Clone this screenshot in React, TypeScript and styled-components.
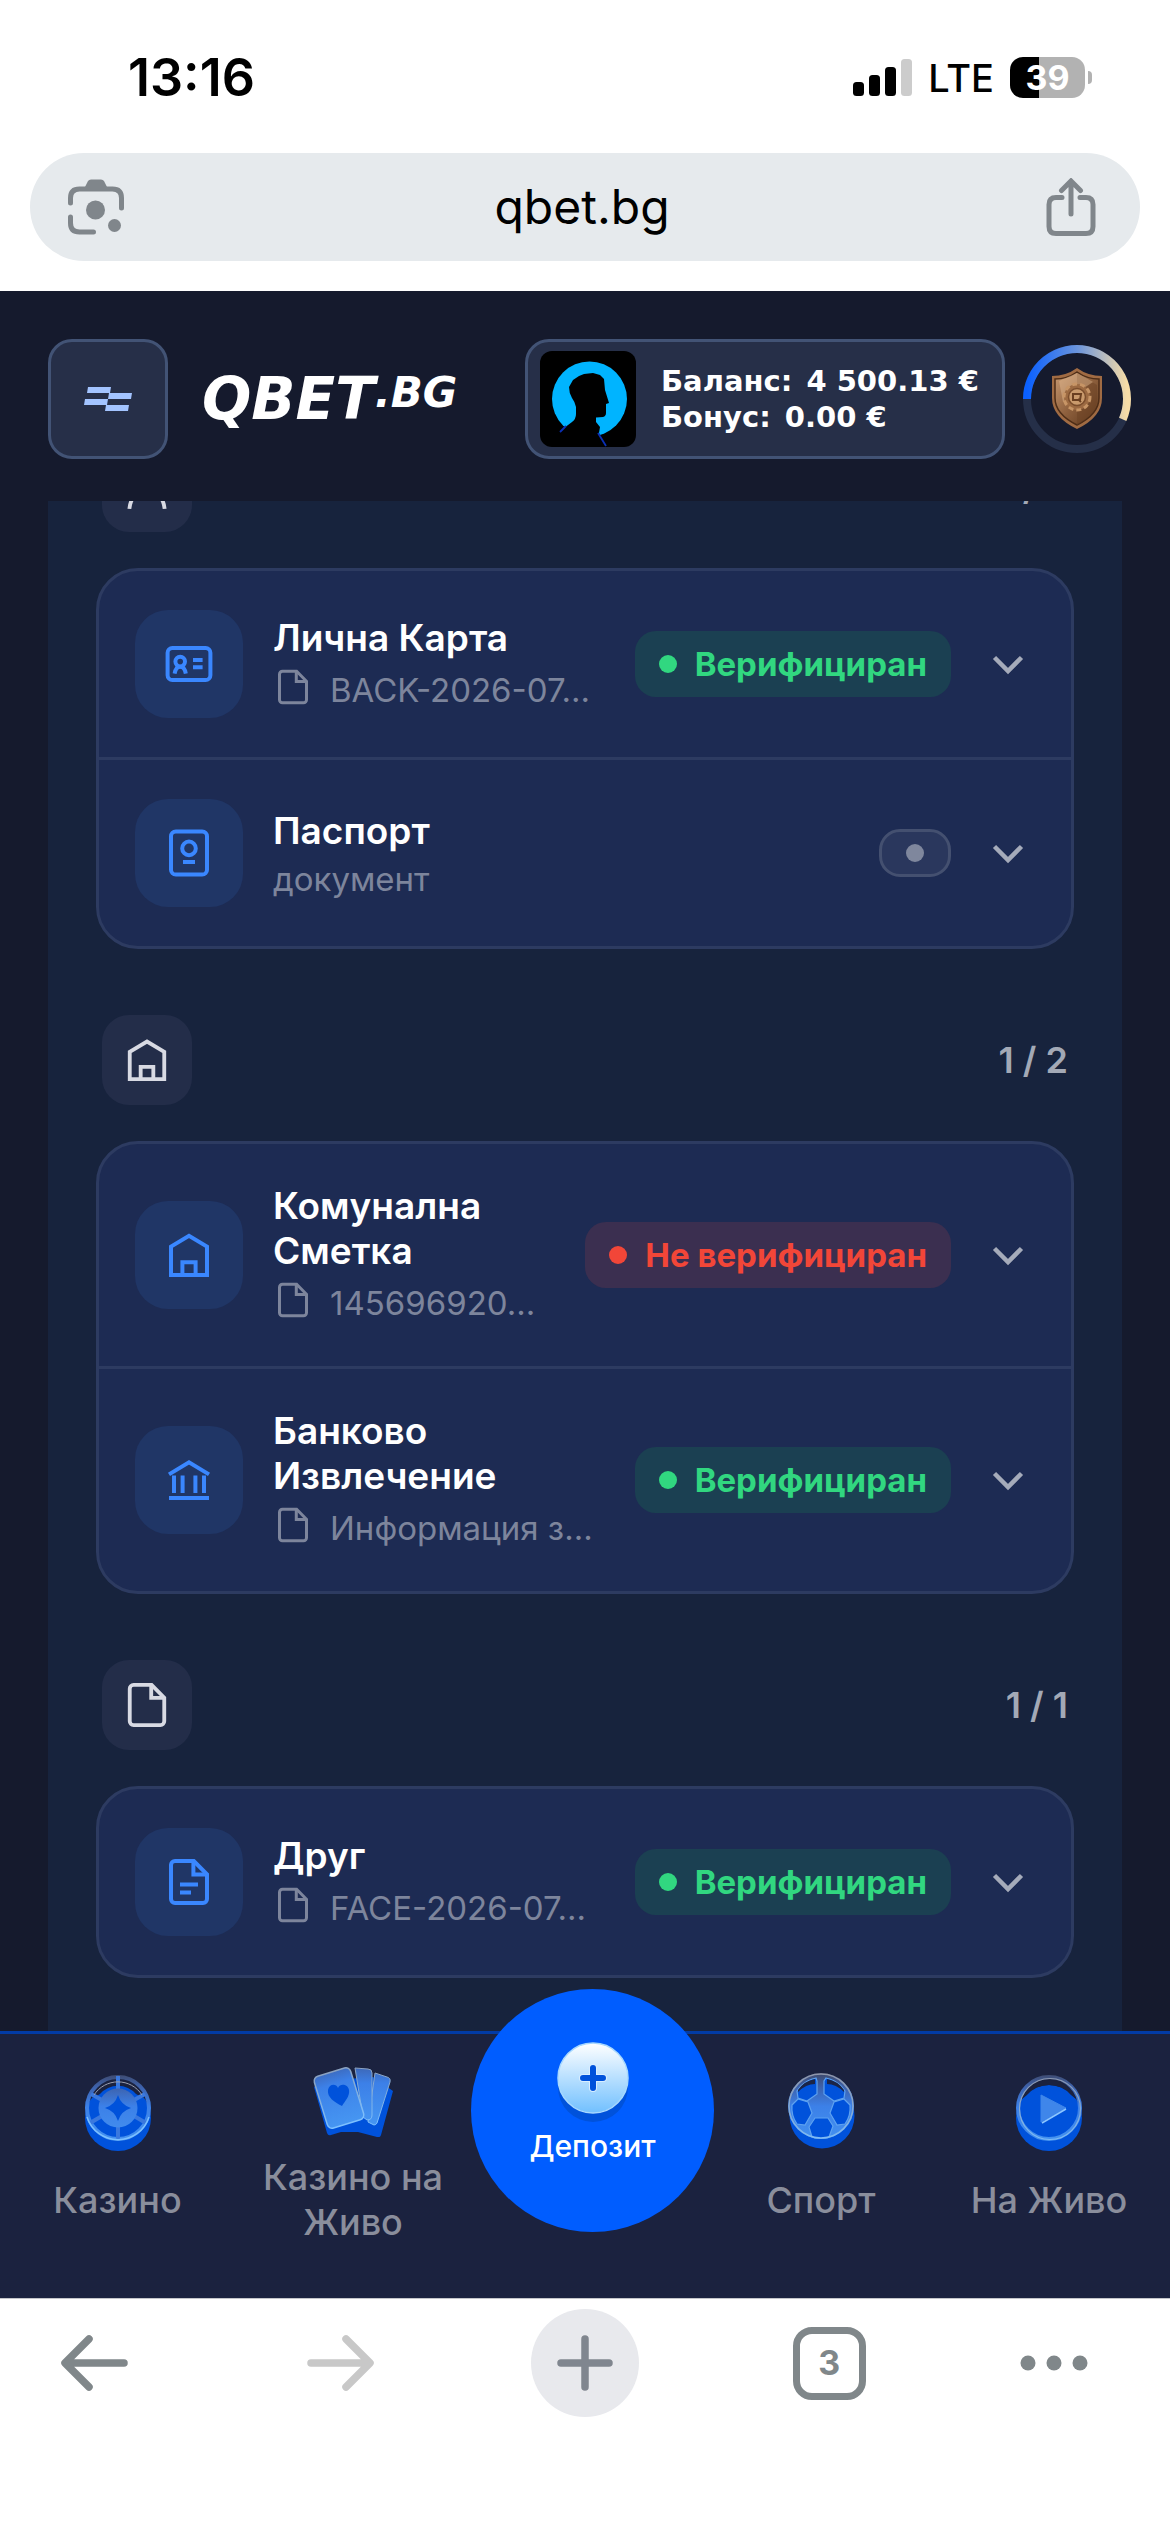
import React from "react";
import styled, { createGlobalStyle, css } from "styled-components";

const GlobalStyle = createGlobalStyle`
  *, *::before, *::after { box-sizing: border-box; }
  body {
    margin: 0;
    background: #ffffff;
    font-family: Inter, "Noto Sans", sans-serif;
    -webkit-font-smoothing: antialiased;
  }
  button { margin: 0; padding: 0; border: 0; background: none; font: inherit; color: inherit; cursor: pointer; }
  a { color: inherit; text-decoration: none; }
  ul { margin: 0; padding: 0; list-style: none; }
  svg { display: block; flex: none; }
`;

const Screen = styled.div`
  display: flex;
  flex-direction: column;
  min-height: 100vh;
`;

/* ---------- phone and browser chrome ---------- */

const StatusBar = styled.div`
  display: flex;
  align-items: center;
  justify-content: space-between;
  height: 153px;
  padding: 2px 78px 0 128px;
  color: #000;
`;

const Clock = styled.time`
  font-size: 52px;
  font-weight: 600;
  line-height: 60px;
`;

const StatusIcons = styled.div`
  display: flex;
  align-items: center;
  gap: 16px;
`;

const Network = styled.span`
  font-size: 38px;
  font-weight: 500;
  line-height: 48px;
`;

const BatteryWrap = styled.div`
  display: flex;
  align-items: center;
  gap: 3px;
`;

const Battery = styled.span`
  width: 75px;
  height: 41px;
  border-radius: 13px;
  background: linear-gradient(90deg, #000 39%, #b2b2b2 39%);
  color: #fff;
  font-size: 34px;
  font-weight: 700;
  line-height: 41px;
  text-align: center;
`;

const BatteryCap = styled.span`
  width: 4px;
  height: 13px;
  border-radius: 0 4px 4px 0;
  background: #b2b2b2;
`;

const AddressBar = styled.div`
  display: flex;
  align-items: center;
  justify-content: space-between;
  height: 108px;
  margin: 0 30px 30px;
  padding: 0 38px;
  border-radius: 54px;
  background: #e6eaed;
  color: #80868b;
`;

const Host = styled.button`
  color: #000;
  font-size: 48px;
  line-height: 60px;
`;

/* ---------- site header ---------- */

const Site = styled.div`
  flex: 1;
  display: flex;
  flex-direction: column;
  background: #151a2d;
  color: #fff;
`;

const Header = styled.header`
  position: relative;
  z-index: 1;
  display: flex;
  align-items: center;
  padding: 48px 39px 42px 48px;
  background: #151a2d;
`;

const boxed = css`
  height: 120px;
  border: 3px solid #425375;
  border-radius: 24px;
  background: #262f48;
`;

const MenuButton = styled.button`
  ${boxed}
  display: grid;
  place-items: center;
  width: 120px;
`;

const Logo = styled.a`
  display: flex;
  align-items: flex-start;
  margin: 0 auto 0 34px;
  font-family: "DejaVu Sans", sans-serif;
  font-weight: 700;
  font-style: italic;
  font-size: 58px;
  line-height: 64px;
`;

const LogoSuffix = styled.span`
  font-size: 42px;
  line-height: 52px;
`;

const Wallet = styled.button`
  ${boxed}
  display: flex;
  align-items: center;
  gap: 25px;
  width: 480px;
  padding-left: 12px;
  margin-right: 18px;
  text-align: left;
`;

const Balances = styled.span`
  display: grid;
  font-family: "DejaVu Sans", sans-serif;
  font-size: 29px;
  font-weight: 700;
  line-height: 36px;
  white-space: nowrap;
`;

const Amount = styled.span`
  margin-left: 4px;
`;

/* ---------- document list ---------- */

const Panel = styled.main`
  flex: 1;
  margin: 0 48px;
  background: #17233d;
`;

/* The list is scrolled, so its first header starts under the site header. */
const Groups = styled.div`
  display: grid;
  gap: 66px;
  margin-top: -59px;
  padding: 0 48px 53px;
`;

const GroupHead = styled.div`
  display: flex;
  align-items: center;
  justify-content: space-between;
  padding: 0 6px;
  margin-bottom: 36px;
`;

const GroupIcon = styled.span`
  display: grid;
  place-items: center;
  width: 90px;
  height: 90px;
  border-radius: 27px;
  background: #232d49;
  color: #d8dae3;
`;

const Count = styled.span`
  color: #a3a9b6;
  font-size: 36px;
  font-weight: 600;
  line-height: 44px;
`;

const Card = styled.ul`
  border: 3px solid #2d3b61;
  border-radius: 42px;
  background: #1d2b53;
  overflow: hidden;
`;

const Item = styled.li`
  & + & { border-top: 3px solid #2d3b61; }
`;

const Row = styled.button`
  display: flex;
  align-items: center;
  gap: 30px;
  width: 100%;
  padding: 39px 36px;
  text-align: left;
`;

const RowIcon = styled.span`
  display: grid;
  place-items: center;
  flex: none;
  width: 108px;
  height: 108px;
  border-radius: 33px;
  background: #203666;
  color: #3a87ff;
`;

const RowText = styled.span`
  flex: 1;
  min-width: 0;
  display: block;
`;

const Title = styled.span`
  display: block;
  font-size: 37px;
  font-weight: 600;
  line-height: 45px;
`;

const Detail = styled.span<{ $file?: boolean }>`
  display: flex;
  gap: 19px;
  margin-top: 6px;
  padding-left: ${(p) => (p.$file ? "2px" : "0")};
  color: #7d859c;
  font-size: 33px;
  line-height: ${(p) => (p.$file ? "48px" : "40px")};
  white-space: nowrap;
  & > svg { margin-top: 3px; }
`;

const tones = {
  ok: { fg: "#31d780", bg: "#1b4052", line: "none" },
  bad: { fg: "#f24638", bg: "#3b2f50", line: "none" },
  none: { fg: "#7f879d", bg: "#2a375d", line: "3px solid #445070" },
};
type Tone = keyof typeof tones;

const Badge = styled.span<{ $tone: Tone }>`
  display: flex;
  flex: none;
  align-items: center;
  gap: 18px;
  height: ${(p) => (p.$tone === "none" ? "48px" : "66px")};
  padding: 0 24px;
  border: ${(p) => tones[p.$tone].line};
  border-radius: 21px;
  background: ${(p) => tones[p.$tone].bg};
  color: ${(p) => tones[p.$tone].fg};
  font-size: 33px;
  font-weight: 700;
  white-space: nowrap;
`;

const Dot = styled.span`
  width: 18px;
  height: 18px;
  border-radius: 50%;
  background: currentColor;
`;

const Chevron = styled.svg`
  width: 54px;
  height: 54px;
  color: #a5abba;
`;

/* ---------- site navigation ---------- */

const BottomNav = styled.nav`
  position: relative;
  z-index: 1;
  display: grid;
  grid-template-columns: 235fr 236fr 243fr 214fr 242fr;
  height: 267px;
  padding-bottom: 46px;
  border-top: 3px solid #023ba5;
  background: #1b223f;
`;

const NavLink = styled.a`
  display: flex;
  flex-direction: column;
  align-items: center;
  justify-content: center;
  gap: 18px;
  color: #8a8e9c;
  font-size: 36px;
  font-weight: 500;
  line-height: 45px;
  text-align: center;
`;

const NavLabel = styled.span`
  max-width: 192px;
`;

const Deposit = styled.button`
  display: flex;
  flex-direction: column;
  align-items: center;
  justify-self: center;
  gap: 4px;
  width: 243px;
  height: 243px;
  margin-top: -45px;
  padding-top: 51px;
  border-radius: 50%;
  background: #005dff;
  font-size: 30px;
  font-weight: 500;
  line-height: 36px;
`;

/* ---------- browser toolbar ---------- */

const Toolbar = styled.footer`
  display: flex;
  align-items: flex-start;
  justify-content: space-between;
  height: 234px;
  padding: 10px 86px 0 41px;
  border-top: 1px solid #c4c6ca;
  background: #fff;
  color: #80878a;
`;

const ToolButton = styled.button<{ $filled?: boolean; $narrow?: boolean }>`
  display: grid;
  place-items: center;
  width: ${(p) => (p.$narrow ? "64px" : "108px")};
  height: 108px;
  border-radius: 50%;
  background: ${(p) => (p.$filled ? "#e8e9ed" : "transparent")};
  color: ${(p) => (p.$filled ? "#80868f" : "inherit")};
  &:disabled { color: #c8c8c8; }
`;

const TabCount = styled.span`
  display: grid;
  place-items: center;
  width: 73px;
  height: 73px;
  border: 7px solid currentColor;
  border-radius: 19px;
  font-size: 34px;
  font-weight: 700;
  line-height: 40px;
`;

/* ---------- line icons ---------- */

type IconName = "person" | "house" | "bank" | "id" | "passport" | "doc" | "file";

const shapes: Record<IconName, React.ReactNode> = {
  person: (
    <>
      <circle cx="12" cy="6" r="4" />
      <path d="M2.8 23.4c.6-6 4-9.6 9.2-9.6s8.600 3.600 9.200 9.600" />
    </>
  ),
  house: (
    <>
      <path d="M3 22V7.800L12 2.400l9 5.400V22z" />
      <path d="M8.700 22v-6.400h6.600V22" />
    </>
  ),
  bank: <path d="M2 9.200 12 3.200l10 6M4.500 9.800v8.700M8.800 9.800v8.700M15.200 9.800v8.700M19.500 9.800v8.700M2 21h20" />,
  id: (
    <>
      <rect x="1.300" y="4" width="21.400" height="16" rx="2.400" />
      <circle cx="7.600" cy="10.800" r="2.400" />
      <path d="M4.800 16.800c.4-2.200 1.300-3.400 2.800-3.400s2.400 1.200 2.800 3.400M14 10h4.800M14 13.600h4.800" />
    </>
  ),
  passport: (
    <>
      <rect x="3" y="1.200" width="18" height="21.600" rx="2.400" />
      <circle cx="12" cy="9.700" r="3.400" />
      <path d="M9 16.500h6" />
    </>
  ),
  doc: (
    <>
      <path d="M5 1.500h9.400L21 8.200v12.300a2 2 0 0 1-2 2H5a2 2 0 0 1-2-2v-17a2 2 0 0 1 2-2z" />
      <path d="M14.200 2v6.300H21M7.500 13.200h9M7.500 17.200h5.500" />
    </>
  ),
  file: (
    <>
      <path d="M5 1.500h9.400L21 8.200v12.300a2 2 0 0 1-2 2H5a2 2 0 0 1-2-2v-17a2 2 0 0 1 2-2z" />
      <path d="M14.200 2v6.300H21" />
    </>
  ),
};

const Icon = ({ name, size }: { name: IconName; size: number }) => (
  <svg width={size} height={size} viewBox="0 0 24 24" fill="none" stroke="currentColor" strokeWidth="2" aria-hidden="true">
    {shapes[name]}
  </svg>
);

/* ---------- illustrations ---------- */

const Glass = ({ id }: { id: string }) => (
  <defs>
    <linearGradient id={id} gradientUnits="userSpaceOnUse" x1="0" y1="8" x2="0" y2="84">
      <stop offset="0" stopColor="#3f4764" />
      <stop offset="0.200" stopColor="#3d62ad" />
      <stop offset="0.450" stopColor="#3c80e8" />
      <stop offset="1" stopColor="#4696f2" />
    </linearGradient>
    <linearGradient id={id + "e"} gradientUnits="userSpaceOnUse" x1="0" y1="8" x2="0" y2="84">
      <stop offset="0" stopColor="#8f95a8" />
      <stop offset="1" stopColor="#7cc0ff" />
    </linearGradient>
  </defs>
);

const CasinoArt = () => (
  <svg width="84" height="96" viewBox="0 0 84 96" aria-hidden="true">
    <Glass id="chip" />
    <circle cx="42" cy="54" r="33" fill="#0052db" />
    <path d="M17 34a28 28 0 0 1 50 0L60 30a24 24 0 0 0-36 0z" fill="#1b223f" />
    <circle cx="42" cy="44" r="31" fill="none" stroke="url(#chip)" strokeWidth="4" />
    <g stroke="#3a78de" strokeWidth="4">
      <path d="M42 12v14M42 62v14M15 30l11 6M58 52l12 7M69 30l-11 6M26 52l-12 7" />
    </g>
    <circle cx="42" cy="44" r="19.500" fill="url(#chip)" />
    <path d="M42 31q3 10 13 13q-10 3-13 13q-3-10-13-13q10-3 13-13z" fill="#0052db" />
    <path d="M11 53a32.500 32.500 0 0 0 62 0" fill="none" stroke="#7cc0ff" strokeWidth="1.500" />
    <path d="M18 31a28.500 28.500 0 0 1 48 0" fill="none" stroke="#9a9fb0" strokeWidth="1" />
  </svg>
);

const CardsArt = () => (
  <svg width="84" height="96" viewBox="0 0 84 96" aria-hidden="true">
    <Glass id="deck" />
    <path d="M3 46 10 40 62 36 82 50 70 94q-1 3-4 2l-19-5H30l-10 3q-3 1-4-2z" fill="#0052db" />
    <path d="M64 32l12 4q4 1 3 5L66 82q-1 2-3 2l-6-3z" fill="url(#deck)" stroke="url(#decke)" />
    <path d="M44 27l13 1q4 0 4 4V74q0 5-5 5l-4-3z" fill="url(#deck)" stroke="url(#decke)" />
    <rect x="9" y="30" width="38" height="54" rx="5" transform="rotate(-17 28 57)" fill="url(#deck)" stroke="url(#decke)" strokeWidth="1.500" />
    <path d="M31 65c-8-4-15-9-14-16 1-6 8-7 10-2 2-5 10-4 11 2 1 6-4 11-7 16z" fill="#0052db" />
  </svg>
);

const BallArt = () => (
  <svg width="84" height="96" viewBox="0 0 84 96" aria-hidden="true">
    <Glass id="ball" />
    <circle cx="43" cy="52" r="32.500" fill="#0052db" />
    <circle cx="42" cy="42" r="33" fill="url(#ball)" />
    <g stroke="#5ea2f0" strokeWidth="1.200">
      <path d="M18 27 22 22q6-6 15-8l1 3v13l-10 7-9-3z" fill="#0052db" />
      <path d="M66 27 62 22q-6-6-15-8l-2 3v13l10 7 10-3z" fill="#0052db" />
      <path d="M13 41l6-6 10 3 4 11-7 12-8-1q-6-8-5-19z" fill="#0052db" />
      <path d="M71 41l-6-6-10 3-4 11 7 12 8-1q6-8 5-19z" fill="#0052db" />
      <path d="M36 54h13l5 8-4 11q-8 3-17 0l-3-10z" fill="#0052db" />
    </g>
    <path d="M19 26Q25 17 36 15v5Q27 20 19 28zM65 26Q59 17 48 15v5Q57 20 65 28z" fill="#1b2547" />
    <circle cx="42" cy="42" r="32" fill="none" stroke="url(#balle)" strokeWidth="1.500" />
  </svg>
);

const LiveArt = () => (
  <svg width="84" height="96" viewBox="0 0 84 96" aria-hidden="true">
    <Glass id="live" />
    <circle cx="42" cy="54" r="33" fill="#0052db" />
    <path d="M15 35a29 29 0 0 1 54 0L64 31a29 29 0 0 0-44 0z" fill="#1b223f" />
    <circle cx="42" cy="44" r="31" fill="none" stroke="url(#live)" strokeWidth="4" />
    <circle cx="43" cy="45" r="30.500" fill="none" stroke="url(#livee)" strokeWidth="1.200" />
    <path d="M34 31v27l25-14z" fill="#3f86ea" stroke="#3f86ea" strokeLinejoin="round" />
    <path d="M35 59 59 45" stroke="#8cc6ff" strokeWidth="1.500" />
  </svg>
);

const DepositArt = () => (
  <svg width="76" height="84" viewBox="0 0 76 84" aria-hidden="true">
    <defs>
      <linearGradient id="coin" x1="0" y1="0" x2="0" y2="1">
        <stop offset="0" stopColor="#ffffff" />
        <stop offset="1" stopColor="#71c0ff" />
      </linearGradient>
    </defs>
    <circle cx="38" cy="47" r="35" fill="#0052db" />
    <circle cx="38" cy="38" r="35" fill="url(#coin)" stroke="#a6d8ff" strokeWidth="1.500" />
    <path d="M38 28v20M28 38h20" stroke="#d9eeff" strokeWidth="8" strokeLinecap="round" />
    <path d="M38 28v20M28 38h20" stroke="#0052db" strokeWidth="6" strokeLinecap="round" />
  </svg>
);

const Avatar = () => (
  <svg width="96" height="96" viewBox="0 0 96 96" role="img" aria-label="Профил">
    <rect width="96" height="96" rx="12" fill="#000" />
    <circle cx="49.500" cy="48" r="37.500" fill="#00b4ff" />
    <path d="M14 90 24 77l8-6q4-3 4-8v-7q-1-5-4-9-3-5-3-11l4-7 6-4 5-2 9-1 7 2 4 4 1 11 4 13-3 1v9q0 3-3 4l-7 .500v4.500l4 5-1 6 5 12z" fill="#000" />
    <path d="M20 81l6-6M58 82l8 13" stroke="#0a2fb4" strokeWidth="1.800" />
  </svg>
);

const Rank = () => (
  <svg width="108" height="108" viewBox="0 0 108 108" role="img" aria-label="Бронзов ранг">
    <defs>
      <linearGradient id="ring" gradientUnits="userSpaceOnUse" x1="4" y1="0" x2="104" y2="0">
        <stop offset="0" stopColor="#0a60ff" />
        <stop offset="0.500" stopColor="#6a94dd" />
        <stop offset="1" stopColor="#f7dca6" />
      </linearGradient>
      <linearGradient id="bronze" x1="0" y1="0" x2="1" y2="1">
        <stop offset="0" stopColor="#c99a72" />
        <stop offset="0.500" stopColor="#8f613e" />
        <stop offset="1" stopColor="#5a3419" />
      </linearGradient>
    </defs>
    <circle cx="54" cy="54" r="50" fill="none" stroke="#252f48" strokeWidth="8" />
    <path d="M4 54A50 50 0 1 1 99.700 74.300" fill="none" stroke="url(#ring)" strokeWidth="8" />
    <path d="M54 23q11 8 25 8v22q0 19-25 31-25-12-25-31V31q14 0 25-8z" fill="#a06b43" />
    <path d="M54 27q10 7 22 7v19q0 16-22 27-22-11-22-27V34q12 0 22-7z" fill="url(#bronze)" stroke="#4d2d17" strokeWidth="1.500" />
    <path d="M54 28v52q20-11 20-27V40z" fill="#6b4224" opacity="0.500" />
    <path d="M36 36l18-8 16 9-30 20z" fill="#e4bd95" opacity="0.450" />
    <circle cx="54" cy="52" r="13" fill="#9c6a42" stroke="#c79566" strokeWidth="3" strokeDasharray="5 3" />
    <circle cx="54" cy="52" r="8.500" fill="#c99a6c" stroke="#7a4d2c" strokeWidth="1.500" />
    <path d="M50 49h8l-1 6-7 0zM55 54l3 3" fill="none" stroke="#6a3f20" strokeWidth="2" />
  </svg>
);

const SignalArt = () => (
  <svg width="59" height="38" viewBox="0 0 59 38" role="img" aria-label="Сигнал">
    <rect x="0" y="23" width="11" height="14" rx="3.500" />
    <rect x="16" y="16" width="11" height="21" rx="3.500" />
    <rect x="32" y="8" width="11" height="29" rx="3.500" />
    <rect x="48" y="0" width="11" height="37" rx="3.500" fill="#ccc" />
  </svg>
);

/* ---------- data ---------- */

type Doc = { icon: IconName; title: string; file?: string; note?: string; tone: Tone };
type Group = { icon: IconName; count: string; docs: Doc[] };

const statusText: Record<Tone, string> = { ok: "Верифициран", bad: "Не верифициран", none: "" };

const groups: Group[] = [
  {
    icon: "person",
    count: "1 / 2",
    docs: [
      { icon: "id", title: "Лична Карта", file: "BACK-2026-07...", tone: "ok" },
      { icon: "passport", title: "Паспорт", note: "документ", tone: "none" },
    ],
  },
  {
    icon: "house",
    count: "1 / 2",
    docs: [
      { icon: "house", title: "Комунална Сметка", file: "145696920...", tone: "bad" },
      { icon: "bank", title: "Банково Извлечение", file: "Информация з...", tone: "ok" },
    ],
  },
  {
    icon: "file",
    count: "1 / 1",
    docs: [{ icon: "doc", title: "Друг", file: "FACE-2026-07...", tone: "ok" }],
  },
];

const DocRow = ({ doc }: { doc: Doc }) => (
  <Item>
    <Row type="button" aria-expanded="false">
      <RowIcon><Icon name={doc.icon} size={48} /></RowIcon>
      <RowText>
        <Title>{doc.title}</Title>
        {doc.file ? (
          <Detail $file><Icon name="file" size={36} />{doc.file}</Detail>
        ) : (
          <Detail>{doc.note}</Detail>
        )}
      </RowText>
      <Badge $tone={doc.tone}><Dot />{statusText[doc.tone]}</Badge>
      <Chevron viewBox="0 0 54 54" fill="none" stroke="currentColor" strokeWidth="4.500" aria-hidden="true">
        <path d="M13.500 20.500 27 34l13.500-13.500" />
      </Chevron>
    </Row>
  </Item>
);

export default function App() {
  return (
    <Screen>
      <GlobalStyle />
      <StatusBar>
        <Clock>13:16</Clock>
        <StatusIcons>
          <SignalArt />
          <Network>LTE</Network>
          <BatteryWrap>
            <Battery>39</Battery>
            <BatteryCap />
          </BatteryWrap>
        </StatusIcons>
      </StatusBar>

      <AddressBar>
        <button type="button" aria-label="Търсене с камера">
          <svg width="56" height="56" viewBox="0 0 56 56" fill="none" stroke="currentColor" strokeWidth="5" strokeLinecap="round">
            <path d="M2.500 24v-5q0-9 9-9h33q9 0 9 9v10M2.500 38v6q0 9 9 9h14" />
            <path d="M17 8l3-6q1-1.500 3-1.500h10q2 0 3 1.500l3 6z" fill="currentColor" stroke="none" />
            <circle cx="27.500" cy="31" r="9.500" fill="currentColor" stroke="none" />
            <circle cx="46.500" cy="46.500" r="6.500" fill="currentColor" stroke="none" />
          </svg>
        </button>
        <Host type="button">qbet.bg</Host>
        <button type="button" aria-label="Споделяне">
          <svg width="62" height="58" viewBox="0 0 62 58" fill="none" stroke="currentColor" strokeWidth="5" strokeLinecap="round">
            <path d="M22 19.500h-6q-7 0-7 7v22q0 7 7 7h30q7 0 7-7v-22q0-7-7-7h-6M31 36V4M21.500 12.500 31 3l9.500 9.500" />
          </svg>
        </button>
      </AddressBar>

      <Site>
        <Header>
          <MenuButton type="button" aria-label="Меню">
            <svg width="48" height="24" viewBox="0 0 48 24" fill="#a3c4ff">
              <path d="M4 0h23l-1 6H3zM25 6h23l-1 6H24zM1 12h23l-1 6H0zM22 18h23l-1 6H21z" />
            </svg>
          </MenuButton>
          <Logo href="#">QBET<LogoSuffix>.BG</LogoSuffix></Logo>
          <Wallet type="button">
            <Avatar />
            <Balances>
              <span>Баланс: <Amount>4 500.13 €</Amount></span>
              <span>Бонус: <Amount>0.00 €</Amount></span>
            </Balances>
          </Wallet>
          <Rank />
        </Header>

        <Panel>
          <Groups>
            {groups.map((g) => (
              <section key={g.icon}>
                <GroupHead>
                  <GroupIcon><Icon name={g.icon} size={46} /></GroupIcon>
                  <Count>{g.count}</Count>
                </GroupHead>
                <Card>
                  {g.docs.map((d) => <DocRow key={d.title} doc={d} />)}
                </Card>
              </section>
            ))}
          </Groups>
        </Panel>

        <BottomNav>
          <NavLink href="#"><CasinoArt /><NavLabel>Казино</NavLabel></NavLink>
          <NavLink href="#"><CardsArt /><NavLabel>Казино на Живо</NavLabel></NavLink>
          <Deposit type="button"><DepositArt />Депозит</Deposit>
          <NavLink href="#"><BallArt /><NavLabel>Спорт</NavLabel></NavLink>
          <NavLink href="#"><LiveArt /><NavLabel>На Живо</NavLabel></NavLink>
        </BottomNav>
      </Site>

      <Toolbar>
        <ToolButton type="button" aria-label="Назад">
          <svg width="68" height="56" viewBox="0 0 68 56" fill="none" stroke="currentColor" strokeWidth="7.500" strokeLinecap="round" strokeLinejoin="round">
            <path d="M63 28H6M28 4 4 28l24 24" />
          </svg>
        </ToolButton>
        <ToolButton type="button" aria-label="Напред" disabled>
          <svg width="68" height="56" viewBox="0 0 68 56" fill="none" stroke="currentColor" strokeWidth="7.500" strokeLinecap="round" strokeLinejoin="round">
            <path d="M5 28h57M40 4l24 24-24 24" />
          </svg>
        </ToolButton>
        <ToolButton type="button" aria-label="Нов раздел" $filled>
          <svg width="56" height="56" viewBox="0 0 56 56" fill="none" stroke="currentColor" strokeWidth="7.500" strokeLinecap="round">
            <path d="M28 4v48M4 28h48" />
          </svg>
        </ToolButton>
        <ToolButton type="button" aria-label="Раздели"><TabCount>3</TabCount></ToolButton>
        <ToolButton type="button" aria-label="Още" $narrow>
          <svg width="68" height="16" viewBox="0 0 68 16" fill="currentColor">
            <circle cx="8" cy="8" r="7.500" />
            <circle cx="34" cy="8" r="7.500" />
            <circle cx="60" cy="8" r="7.500" />
          </svg>
        </ToolButton>
      </Toolbar>
    </Screen>
  );
}
